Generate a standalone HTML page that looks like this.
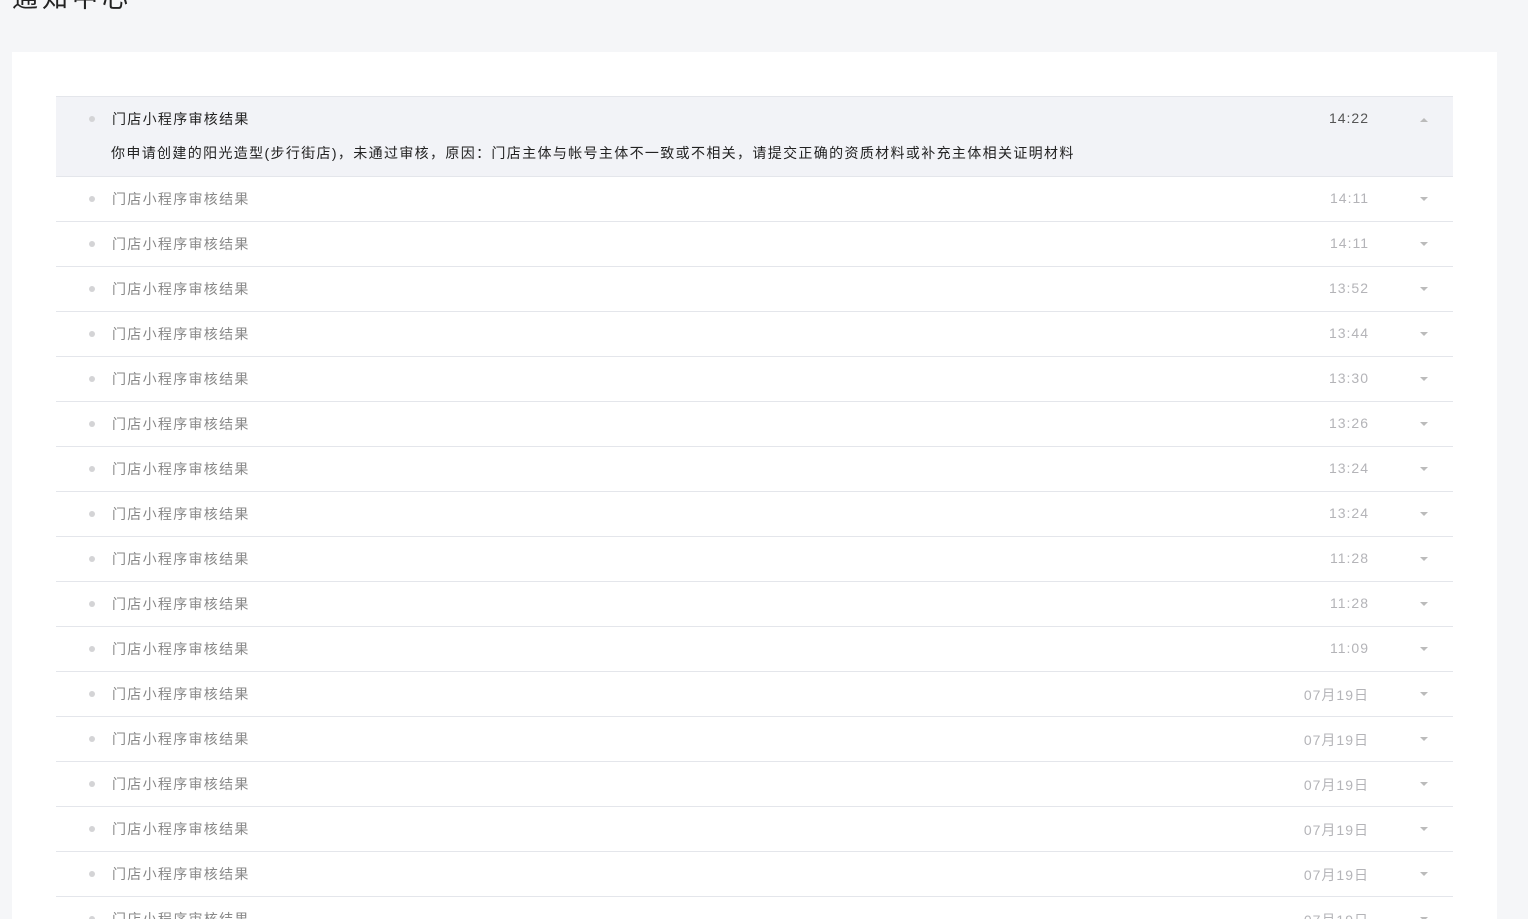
<!DOCTYPE html>
<html><head><meta charset="utf-8"><style>
*{margin:0;padding:0;box-sizing:border-box}
html,body{width:1528px;height:919px;overflow:hidden}
body{background:#f5f6f8;font-family:"Liberation Sans","Noto Sans CJK SC",sans-serif;position:relative}
.title{position:absolute;left:12px;top:-22px;font-size:26px;color:#222;letter-spacing:4px}
.card{position:absolute;left:12px;top:52px;width:1485px;height:867px;background:#fff;overflow:hidden}
.list{position:absolute;left:44px;top:44px;width:1397px;border-top:1px solid #e4e6eb}
.row{position:relative;height:45px;border-bottom:1px solid #e4e6eb}
.row.open{height:80px;background:#f2f3f7}
.dot{position:absolute;left:33px;top:19px;width:6px;height:6px;border-radius:50%;background:#d4d4d6}
.t{position:absolute;left:56px;top:12px;font-size:14px;letter-spacing:1.3px;color:#888}
.open .t{color:#222;top:12px}
.d{position:absolute;left:55px;top:46px;font-size:14px;letter-spacing:1.35px;color:#222;white-space:nowrap}
.tm{position:absolute;right:84px;top:13px;font-size:14px;color:#b4b4b8;letter-spacing:1px}
.open .tm{color:#555}
.ar{position:absolute;left:1364px;top:20px;width:0;height:0;border-left:4px solid transparent;border-right:4px solid transparent;border-top:4px solid #bbb}
.open .ar{border-top:0;border-bottom:4px solid #bbb;top:21px}
</style></head><body>
<div class="title">通知中心</div>
<div class="card"><div class="list">
<div class="row open"><div class="dot"></div><div class="t">门店小程序审核结果</div><div class="tm">14:22</div><div class="ar"></div><div class="d">你申请创建的阳光造型(步行街店)，未通过审核，原因：门店主体与帐号主体不一致或不相关，请提交正确的资质材料或补充主体相关证明材料</div></div>
<div class="row"><div class="dot"></div><div class="t">门店小程序审核结果</div><div class="tm">14:11</div><div class="ar"></div></div>
<div class="row"><div class="dot"></div><div class="t">门店小程序审核结果</div><div class="tm">14:11</div><div class="ar"></div></div>
<div class="row"><div class="dot"></div><div class="t">门店小程序审核结果</div><div class="tm">13:52</div><div class="ar"></div></div>
<div class="row"><div class="dot"></div><div class="t">门店小程序审核结果</div><div class="tm">13:44</div><div class="ar"></div></div>
<div class="row"><div class="dot"></div><div class="t">门店小程序审核结果</div><div class="tm">13:30</div><div class="ar"></div></div>
<div class="row"><div class="dot"></div><div class="t">门店小程序审核结果</div><div class="tm">13:26</div><div class="ar"></div></div>
<div class="row"><div class="dot"></div><div class="t">门店小程序审核结果</div><div class="tm">13:24</div><div class="ar"></div></div>
<div class="row"><div class="dot"></div><div class="t">门店小程序审核结果</div><div class="tm">13:24</div><div class="ar"></div></div>
<div class="row"><div class="dot"></div><div class="t">门店小程序审核结果</div><div class="tm">11:28</div><div class="ar"></div></div>
<div class="row"><div class="dot"></div><div class="t">门店小程序审核结果</div><div class="tm">11:28</div><div class="ar"></div></div>
<div class="row"><div class="dot"></div><div class="t">门店小程序审核结果</div><div class="tm">11:09</div><div class="ar"></div></div>
<div class="row"><div class="dot"></div><div class="t">门店小程序审核结果</div><div class="tm">07月19日</div><div class="ar"></div></div>
<div class="row"><div class="dot"></div><div class="t">门店小程序审核结果</div><div class="tm">07月19日</div><div class="ar"></div></div>
<div class="row"><div class="dot"></div><div class="t">门店小程序审核结果</div><div class="tm">07月19日</div><div class="ar"></div></div>
<div class="row"><div class="dot"></div><div class="t">门店小程序审核结果</div><div class="tm">07月19日</div><div class="ar"></div></div>
<div class="row"><div class="dot"></div><div class="t">门店小程序审核结果</div><div class="tm">07月19日</div><div class="ar"></div></div>
<div class="row"><div class="dot"></div><div class="t">门店小程序审核结果</div><div class="tm">07月19日</div><div class="ar"></div></div>
</div></div>
</body></html>
